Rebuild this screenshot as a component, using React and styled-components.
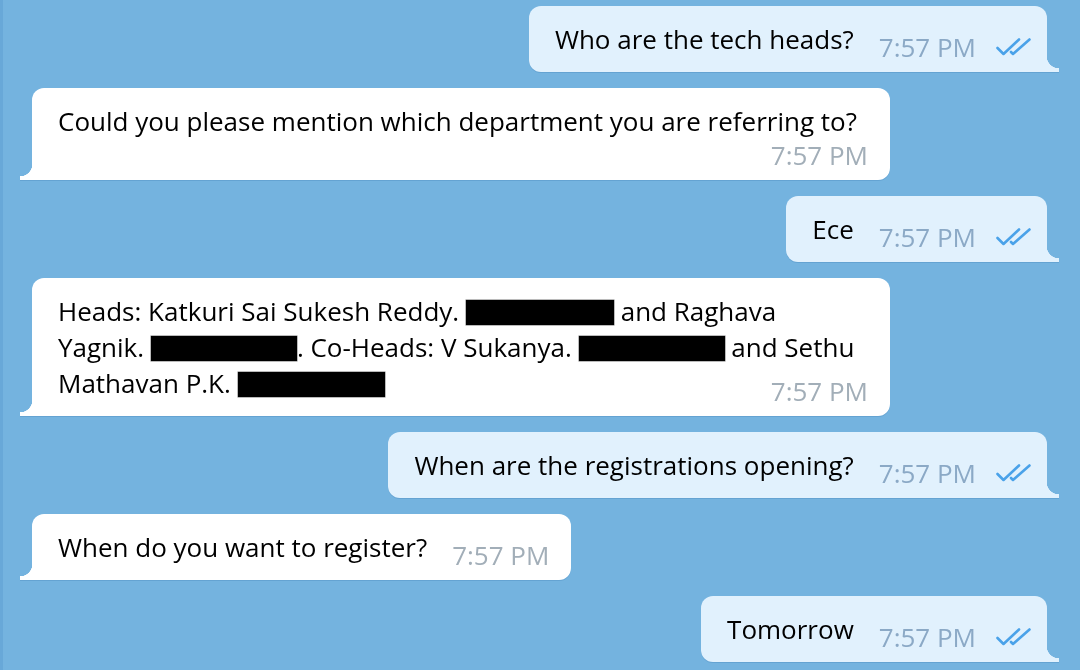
import React from 'react';
import styled, { createGlobalStyle } from 'styled-components';

const GlobalStyle = createGlobalStyle`
  html, body {
    margin: 0;
    padding: 0;
    background: #74b3df;
  }
  body {
    font-family: "Open Sans", "Liberation Sans", sans-serif;
    -webkit-font-smoothing: antialiased;
  }
`;

const Chat = styled.div`
  display: flex;
  flex-direction: column;
  gap: 16px;
  width: 1080px;
  height: 670px;
  box-sizing: border-box;
  padding: 6px 33px 0 29px;
  background: #74b3df;
  border-left: 3px solid #68a8d8;
  overflow: hidden;
`;

// $tight: the time sits on the last line of the text instead of after it
const Bubble = styled.div`
  position: relative;
  align-self: ${p => (p.$out ? 'flex-end' : 'flex-start')};
  max-width: 858px;
  box-sizing: border-box;
  display: ${p => (p.$tight ? 'grid' : 'flex')};
  flex-wrap: wrap;
  align-items: flex-end;
  row-gap: 6px;
  column-gap: 25px;
  padding: ${p => (p.$out ? '15px 15px 15px 26px' : '15px 22px 15px 26px')};
  background: ${p => (p.$out ? '#e1f1fd' : '#ffffff')};
  border-radius: ${p => (p.$out ? '12px 12px 0 12px' : '12px 12px 12px 0')};
  filter: drop-shadow(0 1.5px 0 #64a3d2);

  & > * {
    grid-area: 1 / 1;
  }

  &::after {
    content: '';
    position: absolute;
    bottom: 0;
    width: 12px;
    height: 16px;
    ${p =>
      p.$out
        ? `right: -12px;
           background: radial-gradient(circle at 100% 0, transparent 12px, #e1f1fd 12.5px);`
        : `left: -12px;
           background: radial-gradient(circle at 0 0, transparent 12px, #ffffff 12.5px);`}
  }
`;

const Text = styled.div`
  font-size: 26px;
  line-height: 36px;
  color: #000;
  flex: 0 1 auto;
  min-width: 0;
`;

const Redacted = styled.span`
  display: inline-block;
  width: ${p => p.$w}px;
  height: 25px;
  vertical-align: -4px;
  background: #000;
  box-shadow: 0 0 0 0.5px #777;
`;

const Meta = styled.div`
  display: flex;
  align-items: center;
  justify-self: end;
  align-self: end;
  gap: 20px;
  margin-left: auto;
  font-size: 26px;
  line-height: 20px;
  color: ${p => (p.$out ? '#8ba9c6' : '#a2aeb8')};
  white-space: nowrap;
`;

const Checks = () => (
  <svg width="36" height="18" viewBox="0 0 36 18" fill="none" stroke="#4aa2e9" strokeWidth="2.6" strokeLinecap="round" strokeLinejoin="round">
    <path d="M1.5 10 L7.5 16 L23 1.5" />
    <path d="M15 14 L17 16 L33.5 1.5" />
  </svg>
);

const Message = ({ out, tight, children }) => (
  <Bubble $out={out} $tight={tight}>
    <Text>{children}</Text>
    <Meta $out={out}>
      <span>7:57 PM</span>
      {out && <Checks />}
    </Meta>
  </Bubble>
);

export default function App() {
  return (
    <>
      <GlobalStyle />
      <Chat>
        <Message out>Who are the tech heads?</Message>
        <Message>Could you please mention which department you are referring to?</Message>
        <Message out>Ece</Message>
        <Message tight>
          Heads: Katkuri Sai Sukesh Reddy. <Redacted $w={148} /> and Raghava Yagnik.{' '}
          <Redacted $w={146} />. Co-Heads: V Sukanya. <Redacted $w={146} /> and Sethu Mathavan P.K.{' '}
          <Redacted $w={147} />
        </Message>
        <Message out>When are the registrations opening?</Message>
        <Message>When do you want to register?</Message>
        <Message out>Tomorrow</Message>
      </Chat>
    </>
  );
}
